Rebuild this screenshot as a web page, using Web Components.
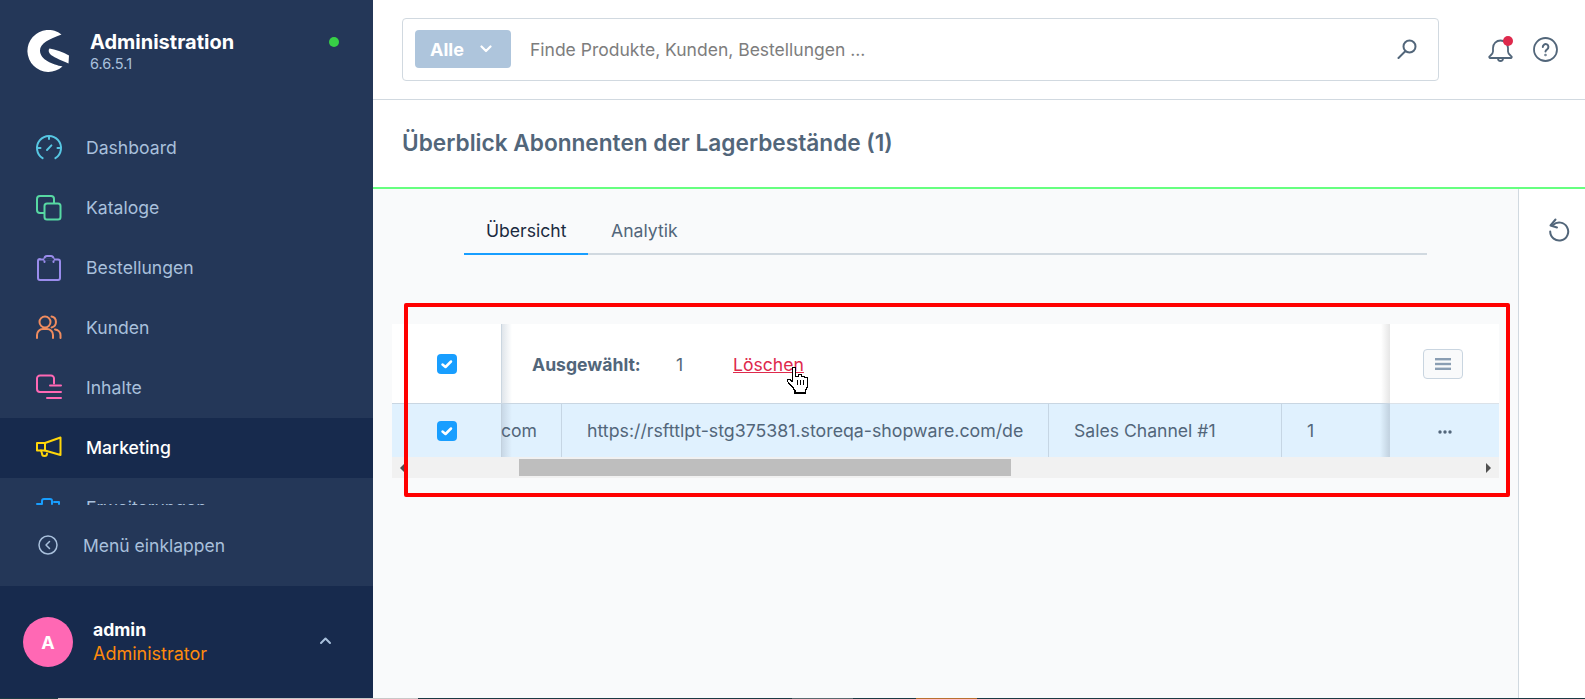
<!DOCTYPE html>
<html lang="de">
<head>
<meta charset="utf-8">
<title>Shopware Administration</title>
<style>
	html, body {
		margin: 0;
		height: 699px;
		overflow: hidden;
		font-family: Inter, "Liberation Sans", sans-serif;
	}
</style>
</head>
<body>
<sw-app>
	<sw-sidebar slot="sidebar">
		<sw-nav-item icon="dashboard">Dashboard</sw-nav-item>
		<sw-nav-item icon="catalog">Kataloge</sw-nav-item>
		<sw-nav-item icon="orders">Bestellungen</sw-nav-item>
		<sw-nav-item icon="customers">Kunden</sw-nav-item>
		<sw-nav-item icon="content">Inhalte</sw-nav-item>
		<sw-nav-item icon="marketing" active>Marketing</sw-nav-item>
		<sw-nav-item icon="extensions">Erweiterungen</sw-nav-item>
	</sw-sidebar>
	<sw-search-bar slot="header"></sw-search-bar>
	<sw-smart-bar slot="header">Überblick Abonnenten der Lagerbestände (1)</sw-smart-bar>
	<sw-tabs slot="main"></sw-tabs>
	<sw-grid slot="main"></sw-grid>
	<sw-side-actions slot="aside"></sw-side-actions>
	<sw-task-strip slot="strip"></sw-task-strip>
</sw-app>

<script>
"use strict";

(function() {
	const icons = {
		dashboard: `<g stroke="#57c7e3"><path d="M6.600 23.200A12 12 0 1 1 19.400 23.200"/><path d="M13 2v2M2.500 13h2M21.500 13h2M11 15l4.400-4.600"/></g>`,
		catalog: `<g stroke="#57d9a3"><path d="M8 18H4a3 3 0 0 1-3-3V4a3 3 0 0 1 3-3h11a3 3 0 0 1 3 3v4"/><rect x="8.500" y="8.500" width="16" height="16" rx="2.500"/></g>`,
		orders: `<g stroke="#9a8cec"><path d="M3.500 4.500H22a2 2 0 0 1 2 2V23a2 2 0 0 1-2 2H4a2 2 0 0 1-2-2V6a2 2 0 0 1 2-2"/><path d="M8.500 7V3.500a2.500 2.500 0 0 1 2.500-2.500h4a2.500 2.500 0 0 1 2.500 2.500V7"/><path d="M9.500 4.500h7" stroke="#243758" stroke-width="2.500"/></g>`,
		customers: `<g stroke="#f08c5f"><circle cx="9" cy="7" r="5.500"/><path d="M1 23v-3a6 6 0 0 1 6-6h4a6 6 0 0 1 6 6v3"/><path d="M15.500 1.600a5.500 5.500 0 0 1 0 10.800M19 14.400a6 6 0 0 1 5.500 5.600v3"/></g>`,
		content: `<g stroke="#ff68b4"><path d="M11 17H4a3 3 0 0 1-3-3V3.500a3 3 0 0 1 3-3h11a3 3 0 0 1 3 3v5"/><path d="M14 10.500h11M11 17h14M11 23h14"/></g>`,
		marketing: `<g stroke="#ffd60a"><path d="M1 8H9L24.500 2.500V20L9 15.500H1z"/><path d="M9 8V15.500M5 15.500l1 3a2.500 2.500 0 0 0 5 0"/></g>`,
		extensions: `<g stroke="#189eff"><path d="M1 9h5M6 9V6a2 2 0 0 1 2-2h6a2 2 0 0 1 2 2v3M18 7h5v2"/></g>`
	};

	function define(name, css, html) {
		customElements.define(name, class extends HTMLElement {
			constructor() {
				super();
				let root = this.attachShadow({mode: "open"});
				root.innerHTML = `<style>${css}</style>${typeof html === "function" ? html(this) : html}`;
			}
		});
	}

	define("sw-app", `
		:host {
			display: grid;
			grid-template-columns: 373px 1fr 67px;
			grid-template-rows: auto 1fr 1px;
			height: 699px;
			background: #f9fafb;
		}
		.side { grid-row: 1 / 3; display: flex; min-height: 0; }
		.head { grid-column: 2 / 4; display: flex; flex-direction: column; }
		.main { min-width: 0; }
		.aside { display: flex; min-height: 0; }
		.strip { grid-column: 1 / 4; display: flex; }
	`, `
		<div class="side"><slot name="sidebar"></slot></div>
		<div class="head"><slot name="header"></slot></div>
		<div class="main"><slot name="main"></slot></div>
		<div class="aside"><slot name="aside"></slot></div>
		<div class="strip"><slot name="strip"></slot></div>
	`);

	define("sw-sidebar", `
		:host {
			display: flex;
			flex-direction: column;
			width: 373px;
			background: #243758;
			color: #a9c0dc;
		}
		.brand {
			height: 118px;
			box-sizing: border-box;
			flex: none;
			display: flex;
			padding: 30px 0 0 27px;
			position: relative;
		}
		.brand svg { width: 42px; height: 42px; flex: none; }
		.brand-text { margin-left: 21px; }
		.brand-title { color: #fff; font-size: 20px; font-weight: 700; line-height: 24px; }
		.brand-version { font-size: 14.500px; line-height: 20px; }
		.dot {
			position: absolute;
			left: 329px;
			top: 37px;
			width: 10px;
			height: 10px;
			border-radius: 50%;
			background: #37d046;
		}
		nav {
			height: 387px;
			flex: none;
			overflow: hidden;
		}
		.collapse {
			height: 81px;
			flex: none;
			box-sizing: border-box;
			display: flex;
			align-items: center;
			padding: 0 0 2px 38px;
			font-size: 17.500px;
		}
		.collapse svg { width: 20px; height: 20px; margin-right: 25px; }
		.collapse span { padding-top: 2px; }
		.user {
			flex: 1;
			background: #172a4d;
			display: flex;
			align-items: center;
			padding: 0 0 0 23px;
			position: relative;
		}
		.avatar {
			width: 50px;
			height: 50px;
			border-radius: 50%;
			background: #ff68b4;
			color: #fff;
			font-weight: 700;
			font-size: 18px;
			display: flex;
			align-items: center;
			justify-content: center;
		}
		.names { margin-left: 20px; }
		.name { color: #fff; font-weight: 700; font-size: 17.600px; line-height: 24px; }
		.role { color: #ff8a0c; font-size: 18px; line-height: 24px; }
		.user svg { position: absolute; left: 319px; top: 50px; width: 13px; height: 9px; }
	`, `
		<div class="brand">
			<svg viewBox="0 0 42 42"><path fill="#fff" d="M34.500 4.500A21 21 0 1 0 35.500 36.500C26 34.500 13 30 13 20.500C13 13.500 22 9 34.500 4.500Z"/><path fill="#fff" d="M22.500 18.500C28 19.500 36 22 42 25.500L41.500 33.500C36 31 28 28 24 25C21.500 23 21 20 22.500 18.500Z"/></svg>
			<div class="brand-text">
				<div class="brand-title">Administration</div>
				<div class="brand-version">6.6.5.1</div>
			</div>
			<span class="dot"></span>
		</div>
		<nav><slot></slot></nav>
		<div class="collapse">
			<svg viewBox="0 0 20 20" fill="none" stroke="#a9c0dc" stroke-width="1.500" stroke-linecap="round" stroke-linejoin="round"><circle cx="10" cy="10" r="9"/><path d="M11.500 6.500L8 10l3.500 3.500"/></svg>
			<span>Menü einklappen</span>
		</div>
		<div class="user">
			<div class="avatar">A</div>
			<div class="names">
				<div class="name">admin</div>
				<div class="role">Administrator</div>
			</div>
			<svg viewBox="0 0 13 9" fill="none" stroke="#a9c0dc" stroke-width="2" stroke-linecap="round" stroke-linejoin="round"><path d="M2 7l4.500-4.500L11 7"/></svg>
		</div>
	`);

	define("sw-nav-item", `
		:host {
			display: flex;
			align-items: center;
			height: 60px;
			padding-left: 36px;
			font-size: 17.600px;
			color: #a9c0dc;
		}
		:host([active]) {
			background: #172a4d;
			color: #fff;
			font-weight: 500;
		}
		svg { width: 26px; height: 26px; margin-right: 24px; flex: none; overflow: visible; }
		span { padding-bottom: 2px; }
	`, (el) => `
		<svg viewBox="0 0 26 26" fill="none" stroke-width="2" stroke-linecap="round" stroke-linejoin="round">${icons[el.getAttribute("icon")]}</svg>
		<span><slot></slot></span>
	`);

	define("sw-search-bar", `
		:host {
			display: flex;
			align-items: center;
			height: 100px;
			box-sizing: border-box;
			background: #fff;
			border-bottom: 1px solid #d1d9e0;
			padding: 0 27px 1px 29px;
		}
		.box {
			width: 1037px;
			height: 63px;
			box-sizing: border-box;
			border: 1px solid #d1d9e0;
			border-radius: 4px;
			display: flex;
			align-items: center;
			padding: 0 21px 0 12px;
		}
		.type {
			width: 96px;
			height: 38px;
			background: #aec5dc;
			border-radius: 4px;
			color: #fff;
			font-weight: 700;
			font-size: 18px;
			display: flex;
			align-items: center;
			padding-left: 15px;
			box-sizing: border-box;
		}
		.type svg { width: 12px; height: 8px; margin-left: 16px; }
		.ph { flex: 1; margin-left: 19px; font-size: 17.500px; color: #7d7d7d; }
		.loupe { width: 20px; height: 20px; }
		.icons { display: flex; margin-left: 49px; gap: 20px; }
		.bell { position: relative; width: 25px; height: 25px; }
		.bell svg, .help { width: 25px; height: 25px; display: block; }
		.badge {
			position: absolute;
			left: 15px;
			top: -1px;
			width: 10px;
			height: 10px;
			border-radius: 50%;
			background: #de294c;
		}
	`, `
		<div class="box">
			<div class="type">Alle<svg viewBox="0 0 12 8" fill="none" stroke="#fff" stroke-width="2.200" stroke-linecap="round" stroke-linejoin="round"><path d="M1.500 1.500L6 6l4.500-4.500"/></svg></div>
			<div class="ph">Finde Produkte, Kunden, Bestellungen ...</div>
			<svg class="loupe" viewBox="0 0 20 20" fill="none" stroke="#52667a" stroke-width="2" stroke-linecap="round"><circle cx="12.500" cy="7.500" r="6"/><path d="M8 12.500L1.500 19"/></svg>
		</div>
		<div class="icons">
			<div class="bell">
				<svg viewBox="0 0 25 25" fill="none" stroke="#52667a" stroke-width="1.800" stroke-linecap="round" stroke-linejoin="round"><path d="M5 11a7.500 7.500 0 0 1 15 0v3.500c0 2 1.500 3 3 4.500a1 1 0 0 1-.7 2H2.700a1 1 0 0 1-.7-2c1.500-1.500 3-2.500 3-4.500z"/><path d="M10 21.500a2.500 2.500 0 0 0 5 0"/></svg>
				<span class="badge"></span>
			</div>
			<svg class="help" viewBox="0 0 25 25" fill="none" stroke="#52667a" stroke-width="1.800" stroke-linecap="round" stroke-linejoin="round"><circle cx="12.500" cy="12.500" r="11.500"/><path d="M9.800 10a2.800 2.800 0 1 1 4.300 2.300c-1 .6-1.600 1.100-1.600 2.200" stroke-width="2"/><circle cx="12.500" cy="18" r=".4" stroke-width="1.600"/></svg>
		</div>
	`);

	define("sw-smart-bar", `
		:host {
			display: flex;
			align-items: center;
			height: 89px;
			box-sizing: border-box;
			background: #fff;
			border-bottom: 2px solid #66ff80;
			padding: 0 0 2px 29px;
			color: #52667a;
			font-size: 22.650px;
			font-weight: 600;
		}
	`, `<slot></slot>`);

	define("sw-tabs", `
		:host {
			display: block;
			margin: 0 91px 0 91px;
			height: 135px;
			box-sizing: border-box;
			padding-top: 18px;
			font-size: 17.600px;
			color: #52667a;
		}
		.bar {
			display: flex;
			height: 46px;
			border-bottom: 2px solid #d1d9e0;
		}
		.tab {
			padding: 0 23px;
			display: flex;
			align-items: center;
			height: 46px;
		}
		.active {
			color: #1b2a3f;
			border-bottom: 2px solid #189eff;
			width: 79px;
			padding-left: 22px;
		}
	`, `
		<div class="bar">
			<div class="tab active">Übersicht</div>
			<div class="tab">Analytik</div>
		</div>
	`);

	define("sw-check", `
		:host {
			display: block;
			width: 20px;
			height: 20px;
			border-radius: 4px;
			background: #189eff;
		}
		svg { display: block; width: 20px; height: 20px; }
	`, `<svg viewBox="0 0 20 20" fill="none" stroke="#fff" stroke-width="2.500" stroke-linecap="round" stroke-linejoin="round"><path d="M5.500 10.500l3 2.500 5.500-5.500"/></svg>`);

	define("sw-grid", `
		:host {
			display: block;
			position: relative;
			margin: 0 19px 0 19px;
			font-size: 17.600px;
			color: #52667a;
		}
		.head, .row {
			display: grid;
			grid-template-columns: 109px 1fr 109px;
		}
		.head { height: 80px; background: #fff; }
		.row { height: 53px; background: #e0f1fe; }
		.head > div { border-bottom: 1px solid #c9d6e2; box-sizing: border-box; padding-top: 1px; }
		.head > .menu { border-bottom-color: #dbe2e9; padding: 0 3px 0 0; }
		.cell-check { display: flex; align-items: center; justify-content: center; }
		.bulk {
			display: flex;
			align-items: center;
			padding: 0 0 0 31px;
			background:
				linear-gradient(to right, #cbd6e0 0, #cbd6e0 1px, rgba(210,218,226,.7) 1px, rgba(255,255,255,0) 11px) left / 11px 100% no-repeat,
				linear-gradient(to left, #e6e6e6 0, rgba(255,255,255,0) 9px) right / 9px 100% no-repeat;
		}
		.bulk b { font-weight: 700; width: 144px; }
		.bulk .count { width: 57px; }
		.bulk a { color: #de294c; text-decoration: underline; }
		.cols {
			display: grid;
			grid-template-columns: 61px 487px 233px 1fr;
			background:
				linear-gradient(to right, #c3d1de 0, #c3d1de 1px, rgba(190,205,220,.7) 1px, rgba(190,205,220,0) 11px) left / 11px 100% no-repeat,
				linear-gradient(to left, #c4d4e2 0, #c4d4e2 1px, rgba(190,205,220,0) 10px) right / 10px 100% no-repeat;
		}
		.cols div {
			display: flex;
			align-items: center;
			white-space: nowrap;
			overflow: hidden;
			border-right: 1px solid #c6d6e4;
			padding-left: 25px;
		}
		.cols .url { font-size: 17.750px; }
		.cols .cut { padding-left: 0; }
		.cols .last { border-right: 0; }
		.menu {
			display: flex;
			align-items: center;
			justify-content: center;
		}
		.menu span {
			width: 40px;
			height: 30px;
			box-sizing: border-box;
			border: 1px solid #c9d5e0;
			border-radius: 4px;
			background: #f9fafb;
			display: flex;
			align-items: center;
			justify-content: center;
		}
		.menu svg { width: 16px; height: 12px; }
		.dots { display: flex; align-items: center; justify-content: center; padding-top: 3px; }
		.dots svg { width: 16px; height: 4px; }
		.scroll {
			display: flex;
			align-items: center;
			height: 21px;
			background: #f1f1f1;
			position: relative;
		}
		.thumb {
			height: 17px;
			width: 492px;
			margin-left: 127px;
			background: #bebebe;
		}
		.arrow {
			position: absolute;
			top: 6px;
			width: 0;
			height: 0;
			border-top: 5px solid transparent;
			border-bottom: 5px solid transparent;
		}
		.arrow.l { left: 8px; border-right: 5px solid #505050; }
		.arrow.r { right: 8px; border-left: 5px solid #505050; }
		.mark {
			position: absolute;
			left: 12px;
			top: -21px;
			width: 1106px;
			height: 194px;
			box-sizing: border-box;
			border: 4px solid #f00;
			border-radius: 2px;
			pointer-events: none;
		}
		.hand {
			position: absolute;
			left: 394px;
			top: 42px;
			width: 23px;
			height: 29px;
		}
	`, `
		<div class="head">
			<div class="cell-check"><sw-check></sw-check></div>
			<div class="bulk"><b>Ausgewählt:</b><span class="count">1</span><a>Löschen</a></div>
			<div class="menu"><span><svg viewBox="0 0 16 12" fill="#8a9eb3"><rect x="0" y="0" width="16" height="2.400"/><rect x="0" y="4.800" width="16" height="2.400"/><rect x="0" y="9.600" width="16" height="2.400"/></svg></span></div>
		</div>
		<div class="row">
			<div class="cell-check"><sw-check></sw-check></div>
			<div class="cols">
				<div class="cut">com</div>
				<div class="url">https://rsfttlpt-stg375381.storeqa-shopware.com/de</div>
				<div>Sales Channel #1</div>
				<div class="last">1</div>
			</div>
			<div class="dots"><svg viewBox="0 0 16 4" fill="#52667a"><circle cx="3" cy="2" r="1.700"/><circle cx="8" cy="2" r="1.700"/><circle cx="13" cy="2" r="1.700"/></svg></div>
		</div>
		<div class="scroll">
			<span class="arrow l"></span>
			<div class="thumb"></div>
			<span class="arrow r"></span>
		</div>
		<div class="mark"></div>
		<svg class="hand" viewBox="0 0 23 29" shape-rendering="crispEdges"><path fill="#fff" stroke="#000" stroke-width="1.300" d="M6.500 1.500h3v9h3v-2h3v2h3v1h3v9l-2 4v3H9v-3l-3-4-4.500-5v-2h2l3 2z"/><path fill="none" stroke="#000" stroke-width="1" d="M11.500 14v5M14.500 14v5M17.500 14v5"/><path stroke="#000" stroke-width="2.500" d="M9 27h10"/></svg>
	`);

	define("sw-side-actions", `
		:host {
			display: flex;
			flex: 1;
			justify-content: center;
			background: #fff;
			border-left: 1px solid #d1d9e0;
			padding-top: 29px;
		}
		svg { width: 22px; height: 24px; margin-left: 14px; }
	`, `<svg viewBox="0 0 22 24" fill="none" stroke="#52667a" stroke-width="2" stroke-linecap="round" stroke-linejoin="round"><path d="M7.500 1.500L2.500 7.500l6.500 2"/><path d="M5 7A9 9 0 1 1 2.200 13.500"/></svg>`);

	define("sw-task-strip", `
		:host { display: flex; flex: 1; height: 1px; background: #1c3a44; }
		i { display: block; height: 1px; }
	`, `
		<i style="width:58px"></i>
		<i style="width:360px;background:#c8c8c8"></i>
		<i style="width:374px"></i>
		<i style="width:61px;background:#5a6a70"></i>
		<i style="width:63px"></i>
		<i style="width:61px;background:#b8702f"></i>
	`);
})();
</script>
</body>
</html>
